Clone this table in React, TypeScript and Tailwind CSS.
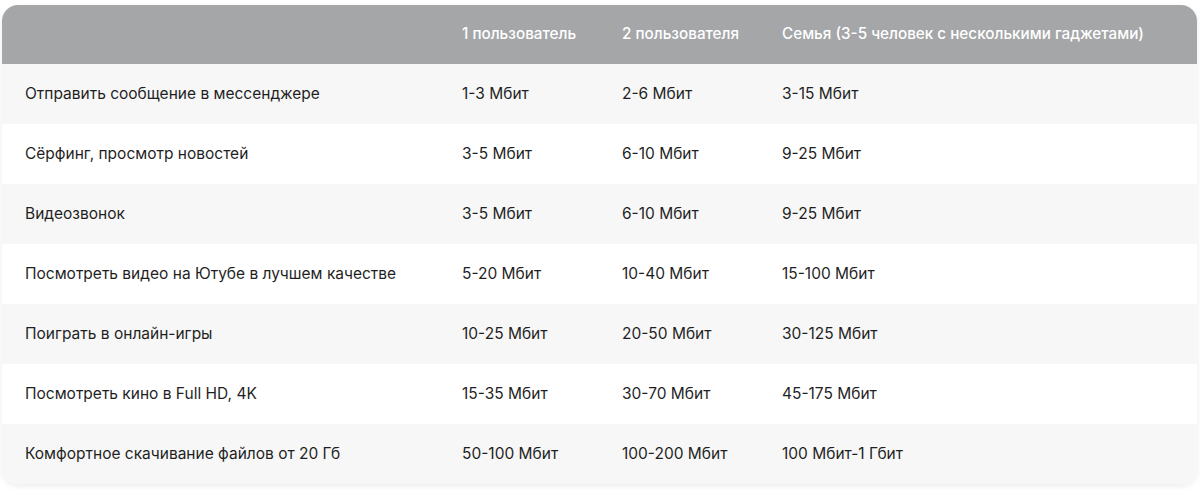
import React from "react";

interface SpeedRow {
  task: string;
  one: string;
  two: string;
  family: string;
}

const rows: SpeedRow[] = [
  { task: "Отправить сообщение в мессенджере", one: "1-3 Мбит", two: "2-6 Мбит", family: "3-15 Мбит" },
  { task: "Сёрфинг, просмотр новостей", one: "3-5 Мбит", two: "6-10 Мбит", family: "9-25 Мбит" },
  { task: "Видеозвонок", one: "3-5 Мбит", two: "6-10 Мбит", family: "9-25 Мбит" },
  { task: "Посмотреть видео на Ютубе в лучшем качестве", one: "5-20 Мбит", two: "10-40 Мбит", family: "15-100 Мбит" },
  { task: "Поиграть в онлайн-игры", one: "10-25 Мбит", two: "20-50 Мбит", family: "30-125 Мбит" },
  { task: "Посмотреть кино в Full HD, 4K", one: "15-35 Мбит", two: "30-70 Мбит", family: "45-175 Мбит" },
  { task: "Комфортное скачивание файлов от 20 Гб", one: "50-100 Мбит", two: "100-200 Мбит", family: "100 Мбит-1 Гбит" },
];

const cols = "grid grid-cols-[460px_160px_160px_1fr] items-center";

export default function App() {
  return (
    <div className="w-[1200px] h-[490px] bg-white pt-[5px] px-[2px] font-['Inter',sans-serif]">
      <div className="w-[1195px] rounded-[16px] overflow-hidden shadow-[0_2px_6px_rgba(0,0,0,0.08)]">
        <div className={`${cols} h-[59px] bg-[#a5a6a8] text-white font-medium text-[15.25px]`}>
          <div />
          <div>1 пользователь</div>
          <div>2 пользователя</div>
          <div>Семья (3-5 человек с несколькими гаджетами)</div>
        </div>
        {rows.map((r, i) => (
          <div
            key={r.task}
            className={`${cols} h-[60px] text-[15.5px] text-[#1f1f1f] ${i % 2 === 0 ? "bg-[#f7f7f7]" : "bg-white"}`}
          >
            <div className="pl-[23px]">{r.task}</div>
            <div>{r.one}</div>
            <div>{r.two}</div>
            <div>{r.family}</div>
          </div>
        ))}
      </div>
    </div>
  );
}
